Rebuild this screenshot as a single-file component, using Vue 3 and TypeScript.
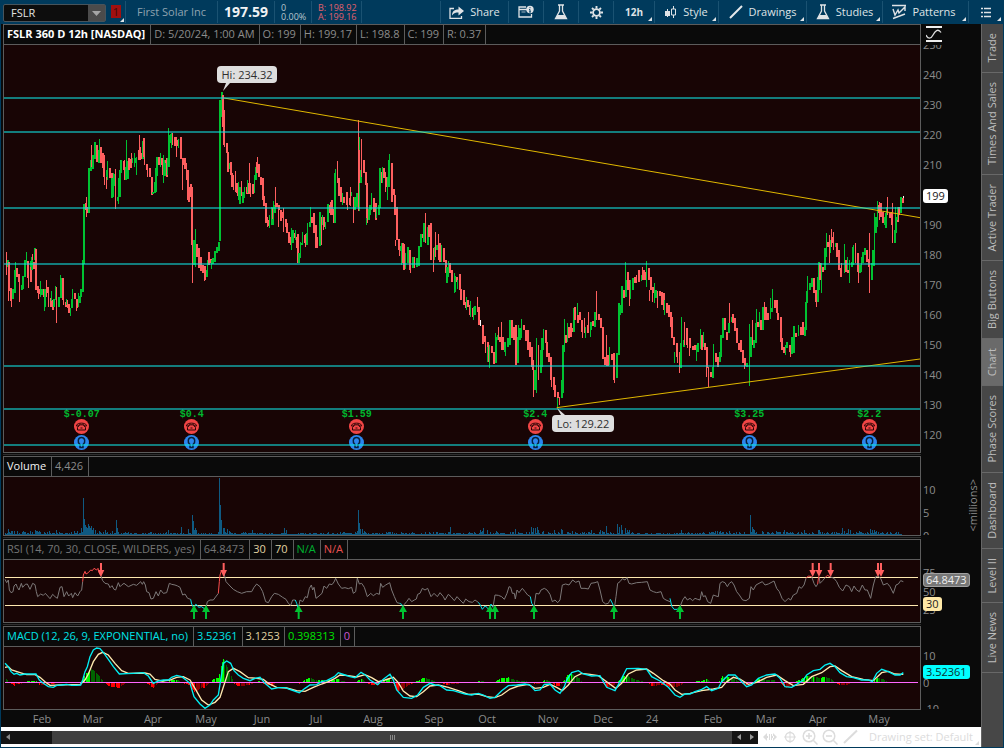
<script setup lang="ts">
import { ref } from 'vue'

type Point = [number, number]

interface Bar {
  x: number
  top: number
  height: number
  width: number
  fill: string
}

interface AxisLabel {
  text: string
  at: number
}

const symbol = ref('FSLR')
const activeTab = ref('Chart')

const tabs = [
  'Trade', 'Times And Sales', 'Active Trader', 'Big Buttons', 'Chart',
  'Phase Scores', 'Dashboard', 'Level II', 'Live News',
]

const quoteCells = ['D: 5/20/24, 1:00 AM', 'O: 199', 'H: 199.17', 'L: 198.8', 'C: 199', 'R: 0.37']

// Chart units: three per pixel. G/R are bodies, g/r are wicks, w is an unchanged bar.
const barColors: Record<string, string> = { g: '#00c232', r: '#ff5f5f', w: '#ffffff' }

const history: [number, string][] = [
  [0, `r18 485 556;G21 510 530;R24 517 603;r24 600 634;R30 593 634;r33 634 650;G36 597 628;G42 540 610;g45 517 545;R48 533 562;R54 552 575;r57 575 637;G63 586 600;G66 558 598;G72 510 560;g78 486 520;R81 512 565;r84 560 593;R90 528 576;g90 513 530;G93 500 540;r96 492 510;R99 517 538;G102 475 510;R105 478 600;R111 588 610;r114 600 628;R117 598 612;g120 573 620;G123 597 616;R129 597 620;G131 597 650;g132 640 662;r138 569 620;R141 590 610;r144 595 650;R150 625 650;g153 602 632;R156 630 660;G160 627 650;g165 588 630;r168 590 700;G174 622 650;G180 563 625;g181 556 575;R186 563 630;r189 600 646;R195 636 650;g198 626 645;R204 642 668;r201 630 655;g210 655 677;G213 628 655;g216 598 650;R222 608 626;R228 626 655;r228 655 664;g234 610 650;G237 618 640;G240 597 620;G245 510 607;G250 343 522;R255 340 360;r258 320 380;R261 350 368;G264 235 370;G270 210 242;r273 165 230;G276 196 236;G282 155 206;R288 165 215;g294 180 220;g297 148 218;R300 172 218;R306 188 235;R310 230 260;r312 196 285;G318 240 262;g321 213 270;r318 262 298;R327 235 265;R333 248 270;G334 264 324;g339 250 320;G340 252 288;r345 238 356;G351 320 332;g354 265 342;G358 240 322;G361 210 250;R369 212 240;r372 210 270;G376 230 270;g378 150 255;G382 214 268;R384 205 240;R390 206 235;r393 190 230;g396 205 220;g402 190 232;G405 204 220;g408 200 254;R414 180 210;r417 136 200;r420 170 210;R423 190 206;G426 153 208;R430 145 202;r432 145 226;R438 222 240;r441 225 262;R446 233 260;R452 260 315;G456 305 312;G462 276 310;G466 235 306;G468 200 258;R474 202 225;g480 190 230;R483 204 226;r486 212 256;g489 195 280;G492 210 258;R495 210 220;R498 204 262;g501 205 255;G505 136 232;g504 115 140;G511 132 160;g514 130 175;r517 130 165;R522 142 168;r528 142 200;R530 150 168;g534 148 175;R540 142 206;R546 205 225;r546 225 300;R552 205 238;r558 218 270;R561 240 330;R564 290 336;R570 282 320;R574 290 465;r576 465 578;G579 450 526;g585 418 530;R588 462 500;R594 475 535;R600 500 542;R606 525 548;R611 528 570;r612 560 574;G617 540 560;g621 510 545;R624 487 525;R630 508 520;g633 510 536;G636 505 522;G642 483 515;G648 470 490;G654 456 484;G658 30 452;G662 6 80;R666 14 110;R670 60 165;r672 120 172;R678 160 188;R682 186 246;G686 220 236;R690 215 255;R694 250 292;r699 255 300;r705 242 305;R708 280 308;r711 290 318;G716 292 342;g714 275 330;r723 272 318;G727 306 340;g732 290 325;R737 292 312;g741 270 310;R745 280 312;r747 220 308;r750 278 320;R756 283 312;g762 255 310;G765 230 270;R768 215 250;r771 200 250;R774 222 262;R780 262 285;R786 265 330;R790 318 348;R796 340 400;r801 380 412;R804 390 408;g807 375 415;G812 350 405;R816 355 388;g819 333 405;G823 345 370;r825 290 350;R828 338 352;R834 345 360;r834 345 410;R840 360 393;r846 365 385;r849 355 425;R854 388 410;R858 400 430;R864 425 460;R870 440 465;g873 415 480;G876 420 460;R882 430 445;g885 420 450;r888 440 475;R892 432 520;G895 490 520;g900 455 505;G903 460 465;g906 427 465;R912 436 460;r915 432 470;G919 430 465;g921 400 465;G927 395 410;g930 352 405;R934 380 400;R939 370 430;R946 405 475;r951 440 475;G956 366 468`],
  [960, `r3 380 465;g7 375 405;R9 380 410;r10 385 420;g15 395 418;G21 342 395;R27 345 370;r30 335 375;R33 330 375;R39 358 398;G43 250 400;g46 238 260;r51 212 280;R55 265 318;R60 290 335;g66 310 345;R70 320 340;R78 305 345;r81 320 360;R86 325 345;r90 292 348;g93 305 318;r99 320 398;G103 322 360;G108 310 350;G113 142 362;r115 90 363;r118 180 280;G121 240 278;r124 147 260;R129 210 250;R134 245 285;R139 280 400;g138 385 405;G144 358 390;G148 345 375;g154 310 360;R159 325 365;R165 340 390;g168 350 385;G174 345 375;G178 235 355;R184 245 280;g187 230 280;R190 235 265;r196 245 305;R199 262 290;g201 262 330;G205 210 290;g208 193 218;R213 220 335;R219 297 315;R222 315 375;R227 350 450;r226 450 468;R234 448 480;r236 460 498;G240 468 482;R245 460 520;g243 460 525;R250 462 540;g256 490 538;G262 472 520;R268 480 540;r271 520 548;G276 500 535;r282 500 535;G288 505 530;G294 468 528;G300 432 470;R306 432 445;G308 400 455;r316 370 460;G321 410 465;R324 405 440;R331 398 510;G338 480 510;r340 475 545;g342 470 510;r346 425 500;G349 465 480;r355 433 510;R358 460 515;g364 465 515;R370 475 515;R376 510 550;G379 530 580;g383 513 560;R388 520 550;R394 540 575;G401 558 605;g403 550 610;R407 560 575;g410 570 598;R416 552 600;R421 598 630;R428 600 645;R434 635 655;g437 620 660;R440 630 650;R446 645 675;g450 632 680;R455 655 680;g460 650 690;G463 648 675;r470 620 665;R474 652 705;r478 650 680;w480 690 708;R486 705 762;R492 738 755;r495 738 790;R500 755 815;g502 770 815;g508 765 835;R513 768 790;R519 785 822;G524 740 820;g526 730 770;G530 735 750;r533 710 750;R537 742 755;r542 697 780;R547 740 780;G553 755 785;g556 765 798;G562 745 770;G567 690 765;R573 690 745;R579 710 750;R585 705 825;G590 740 820;g593 705 800;G598 715 750;g604 686 745;R609 705 720;R614 720 752;R620 720 780;R626 755 800;R632 770 830;R637 810 840;r638 840 920;G642 840 900;g648 745 908;r655 765 870;G659 780 850;G664 745 830;g668 717 780;R674 720 760;R679 755 800;R685 790 815;R691 800 870;r692 870 892;R698 860 900;R703 885 920;g710 905 950;R712 905 925;r716 920 945;G722 870 925;G726 765 908;g733 688 785;R734 735 760;g740 700 755;R745 712 745;R750 700 742;R754 715 725;G758 655 725;R763 650 690;g772 640 690;R770 675 700;R778 665 690;R784 690 725;r787 690 745;r793 685 730;g796 712 745;R802 705 730;r805 665 730;G811 695 720;g811 700 740;R817 692 708;G822 665 710;r829 602 690;R833 672 690;R839 685 715;R845 710 808;R851 800 825;r858 735 828;R862 795 828;g868 770 825;R874 792 810;R880 790 870;r883 870 878;G889 790 865;G893 640 795;G898 645 675;G904 588 670;R910 600 625;G916 570 622;g916 515 570;R921 545 600;R926 570 625;r928 620 648;g931 570 628;G936 565 600;R942 560 580;r948 555 580;R953 540 575`],
  [1920, `g2 555 572;r5 530 570;R10 540 570;R16 545 570;g19 513 590;R24 535 570;R29 560 600;r28 600 634;R36 590 610;r36 600 635;g43 580 640;G46 600 625;r52 603 655;R57 603 618;R64 605 645;R68 608 660;g73 630 675;R78 640 670;R84 645 680;R90 665 710;R94 680 745;R99 740 765;g101 785 820;R108 760 800;r111 770 818;R116 785 835;r116 830 850;G121 760 835;g124 680 770;G128 750 772;r133 695 765;R138 715 765;r142 720 775;R148 745 775;r148 760 797;R155 768 780;R161 765 780;g167 765 812;G172 760 785;g181 718 778;R184 735 780;g190 725 770;R193 760 780;R197 770 835;r197 830 860;r205 830 890;R210 845 862;G216 830 863;g220 762 830;R225 790 815;R231 800 830;G236 785 815;G241 735 800;G246 685 745;R252 683 720;R257 725 750;G263 700 730;r268 640 700;G272 680 695;R277 672 700;R283 685 722;R289 715 760;R294 760 780;R301 750 785;R306 780 820;R311 805 828;r313 810 838;G319 820 830;g328 703 888;G330 740 800;r335 690 765;G340 750 775;G345 700 760;g349 658 740;R352 695 712;g358 665 710;R361 690 720;G366 650 720;r371 635 690;R376 650 690;R382 670 690;g389 625 688;G394 655 665;g397 597 665;R401 630 655;R407 630 670;R412 670 690;R419 680 755;R424 745 780;R430 770 788;g434 765 795;G439 755 775;R446 765 785;r449 770 800;G454 740 792;G459 708 790;R466 730 742;g475 705 738;R480 710 735;R485 695 735;G491 710 738;G495 635 720;G499 602 640;g502 558 615;G508 580 600;G514 563 592;R519 565 610;R526 600 635;r527 630 652;G532 560 635;G534 517 600;R537 520 570;g542 520 610;R547 532 545;G552 475 540;g557 430 500;R561 455 470;r566 435 518;g569 450 490;r574 418 470;R574 440 460;r580 425 480;G584 460 470;R588 460 500;R593 480 540;R600 535 560;r604 520 562;g611 462 550;R616 510 545;g622 500 545;R622 540 550;g628 510 580;G632 515 530;G637 470 525;g640 465 515;r646 458 520;R651 490 545;r653 540 578;G658 525 550;g662 500 545;G667 485 520;G672 475 495;R678 480 515;R685 508 530;r688 430 610;G692 520 570;g695 480 560;G700 480 528;g701 370 480;G705 380 430;g710 332 410;R715 345 370;r718 335 390;R721 340 380;R726 365 400;G732 380 405;G736 370 415;g738 350 400;r742 322 375;R748 370 385;R754 365 405;r757 340 460;G761 420 460;G766 380 430;g766 350 390;R770 370 395;g772 350 390;R775 350 375;G781 322 370;R786 325 340;w789 319 323`],
]

const candles: Bar[] = history.flatMap(([offset, text]) =>
  text.split(';').map((entry) => {
    const [x, top, bottom] = entry.slice(1).split(' ').map(Number)
    const kind = entry[0]
    const wide = kind === 'G' || kind === 'R'
    return {
      x: Math.round((x + offset) / 3) * 3,
      top,
      height: bottom - top,
      width: wide ? 6 : 3,
      fill: barColors[kind.toLowerCase()],
    }
  }),
)

const levels = [21, 123, 351, 519, 825, 954, 1062]

const events = [
  { at: 245, amount: '$-0.07' },
  { at: 575, amount: '$0.4' },
  { at: 1070, amount: '$1.59' },
  { at: 1606, amount: '$2.4' },
  { at: 2248, amount: '$3.25' },
  { at: 2608, amount: '$2.2' },
]

const span = 2748
const origin = 12
const across = (unit: number) => `${((unit - origin) / span) * 100}%`
const down = (px: number, height: number) => `${(px / height) * 100}%`

const priceLabels: AxisLabel[] = Array.from({ length: 14 }, (_, i) => ({
  text: String(250 - i * 10),
  at: i * 30,
})).filter((label) => label.text !== '200')
const volumeLabels: AxisLabel[] = [{ text: '10', at: 13 }, { text: '5', at: 36 }, { text: '0', at: 59 }]
const rsiLabels: AxisLabel[] = [{ text: '75', at: 13 }, { text: '50', at: 32 }, { text: '25', at: 50 }]
const macdLabels: AxisLabel[] = [{ text: '10', at: 9 }, { text: '0', at: 36 }, { text: '-10', at: 62 }]

const months: [string, number][] = [
  ['Feb', 42], ['Mar', 93], ['Apr', 153], ['May', 206], ['Jun', 262], ['Jul', 316], ['Aug', 373], ['Sep', 434],
  ['Oct', 487], ['Nov', 548], ['Dec', 603], ['24', 652], ['Feb', 713], ['Mar', 766], ['Apr', 818], ['May', 879],
]

// Volume: quiet sessions plus the sessions that stand out.
const volumeSpikes: Record<number, number> = {
  24: 18, 105: 15, 108: 12, 168: 14, 243: 20, 249: 111, 252: 48, 255: 30, 258: 24, 261: 20, 264: 33, 267: 26, 270: 22, 273: 26, 276: 16, 279: 20, 285: 15,
  315: 14, 348: 45, 351: 20, 504: 14, 543: 24, 564: 18, 576: 60, 579: 42, 582: 15, 585: 20, 588: 14, 657: 171, 660: 90, 663: 46, 669: 20, 672: 20, 681: 18, 687: 12,
  756: 14, 852: 22, 858: 15, 1071: 12, 1074: 75, 1077: 36, 1080: 18, 1086: 18, 1092: 12, 1350: 24, 1440: 16, 1449: 22, 1461: 15, 1545: 18, 1593: 24, 1599: 20, 1605: 22, 1611: 24, 1614: 16,
  1662: 15, 1683: 18, 1686: 15, 1773: 15, 1800: 15, 1818: 28, 1851: 34, 1857: 24, 1863: 31, 1866: 15, 1875: 22, 1881: 16, 1887: 16,
  2043: 15, 2160: 12, 2250: 60, 2256: 25, 2259: 18, 2262: 14, 2352: 16, 2412: 14, 2454: 16, 2457: 16, 2526: 22, 2532: 12, 2544: 18, 2550: 14, 2610: 18, 2616: 14, 2622: 14,
}
const busy: Point[] = [[15, 10], [280, 12], [330, 9], [400, 5], [480, 6], [620, 4], [690, 8], [800, 4], [950, 5], [1100, 6], [1220, 8], [1400, 5], [1440, 10], [1560, 6], [1620, 10], [1780, 8], [1880, 12], [1900, 4], [2010, 8], [2080, 5], [2160, 9], [2270, 9], [2360, 9], [2440, 8], [2520, 7], [2620, 9], [2700, 6]]

function interpolate(points: Point[], x: number): number {
  const next = points.findIndex((p) => p[0] >= x)
  if (next <= 0) return points[next === 0 ? 0 : points.length - 1][1]
  const [x0, y0] = points[next - 1]
  const [x1, y1] = points[next]
  return y0 + ((y1 - y0) * (x - x0)) / (x1 - x0)
}

const volumeBars: Bar[] = []
for (let x = 15, seed = 7; x < 2706; x += 3) {
  seed = (seed * 1103515245 + 12345) % 2147483648
  const noise = (seed / 2147483648) ** 2
  const quiet = 3 + Math.round((noise * interpolate(busy, x)) / 3) * 3
  const height = volumeSpikes[x] ?? quiet
  volumeBars.push({ x, top: 255 - height, height, width: 3, fill: '#0f5a82' })
}

// RSI: each run is [colour, offset, points].
const tones: Record<string, string> = { n: '#7c7878', r: '#ff4d4d', c: '#00e0e8' }
const rsiRuns: [string, number, string][] = [
  ['n', 0, '15,388 20,398 25,390 28,420 33,428 39,425 42,408 48,402 52,412 57,420 64,400 68,412 76,403 82,402 90,418 98,400 105,404 109,425 113,440 122,432 130,436 136,430 150,446 158,433 165,440 172,445 180,412 186,410 192,440 200,425 206,438 214,430 218,443 225,428 233,438 240,425 245,420 248,395'],
  ['r', 0, '248,395 250,375 255,364 258,372 265,368 272,360 277,362 282,355 290,360 294,355 297,368 303,378'],
  ['n', 0, '303,378 308,392 315,400 325,402 330,413 336,407 342,418 347,420 355,398 360,410 365,405 372,400 385,410 400,403 410,406 422,395 427,403 431,395 436,405 440,425 447,428 453,447 460,445 468,425 475,438 482,420 490,430 500,428 508,400 515,403 525,405 533,408 540,412 548,435 555,432 563,445 572,448'],
  ['c', 0, '572,448 575,462 582,475 587,463 592,466 596,472 604,470 612,475 617,478'],
  ['n', 0, '617,478 622,455 630,450 640,450 655,430'],
  ['r', 0, '655,430 658,395 660,375 664,362 670,362'],
  ['n', 0, '670,362 678,395 690,408 700,418 712,425 725,430 740,425 755,425 762,412 770,402 780,410 788,425 797,455 805,458 815,440 823,430 835,433 848,442 858,448 865,460 872,466 878,450 886,450'],
  ['c', 0, '886,450 890,460 895,476'],
  ['n', 0, '895,476 900,450 908,455 916,440 922,443 928,415 934,405 938,420 942,412 948,445 957,438 966,430 972,408 980,415 988,402 996,404 1002,396 1007,385 1015,402 1025,415 1035,413 1045,416 1055,412 1060,430 1067,425 1072,384 1078,402 1085,400 1093,412 1102,440 1112,430 1120,437 1130,430 1138,433 1142,400 1148,412 1157,405 1169,398 1175,420 1183,440 1191,458 1199,460'],
  ['c', 1005, '194,460 200,463 204,472'],
  ['n', 1005, '204,472 208,463 215,455 222,445 230,455 238,450 244,447 248,433 255,430 262,415 270,420 278,415 288,440 297,430 307,440 315,428 325,440 330,450 340,433 348,440 358,452 366,440 375,450 385,460 392,447 402,455 412,457 420,450 430,457'],
  ['c', 1005, '430,457 436,465 442,478 450,468 456,472 462,480 468,462 474,472'],
  ['n', 1005, '474,472 480,435 490,436 500,440 508,448 516,430 522,410 527,412 532,430 538,430 541,447 546,420 552,428 562,415 570,425 578,435 586,440'],
  ['c', 1005, '586,440 590,460 597,470'],
  ['n', 1005, '597,470 603,430 612,432 618,420 628,415 636,420 645,433 652,455 660,450 668,458 675,450 682,405 692,402 702,405 713,390 722,397 732,393 738,415 750,415 760,417 768,400 780,398 788,395 795,420 803,455 812,462 820,460 826,448'],
  ['c', 1005, '826,448 833,462 838,475'],
  ['n', 1005, '838,475 843,440 848,400 855,395 862,386 870,390 876,383 882,400 890,402 905,398 920,397 937,395 945,420 955,425 965,428 978,425 985,445 993,450 1005,455'],
  ['c', 2010, '0,445 5,468 12,478 22,478 30,470'],
  ['n', 2010, '30,470 38,450 45,440 52,450 60,445 68,452 75,445 83,448 90,450 95,425 100,440 106,437 113,455 122,460 130,435 138,438 145,440 150,400 157,395 165,398 172,410 178,400 185,395 192,405 200,425 208,435 218,450 228,452 238,445 243,410 250,420 258,405 267,400 277,395 285,405 295,402 312,393 320,415 328,425 336,445 345,455 355,445 362,450 370,435 380,430 387,410 394,415 402,405 408,385'],
  ['r', 2010, '408,385 415,378 425,380'],
  ['n', 2010, '425,380 432,400 438,410 443,402'],
  ['r', 2010, '443,402 446,380 448,383'],
  ['n', 2010, '448,383 450,400 458,392 466,382'],
  ['r', 2010, '466,382 472,376 480,380'],
  ['n', 2010, '480,380 492,385 500,395 508,412 518,423 528,405 538,410 545,425 552,408 560,420 568,425 577,405 585,420 592,420 602,445 610,405 617,380 624,378 632,385 640,405 652,400 660,410 670,430 678,405 685,402 692,392 700,395'],
]
const parse = (text: string): Point[] => text.split(' ').map((pair) => pair.split(',').map(Number) as Point)
const sellSignals = [303, 671, 2438, 2457, 2492, 2634, 2643]
const buySignals = [582, 618, 896, 1209, 1470, 1485, 1602, 1842, 2040]

const macd = parse('15,640 25,650 33,665 42,673 50,670 60,675 75,672 90,672 108,672 118,690 130,700 145,710 160,712 170,706 185,705 200,703 215,706 230,706 242,705 248,690 255,665 262,650 270,620 280,600 290,594 300,596 312,610 325,628 340,650 358,672 380,671 400,670 430,668 445,678 460,700 475,693 490,690 505,690 515,682 530,676 545,680 555,688 570,700 582,740 600,762 615,775 630,765 640,750 655,735 662,690 670,640 680,633 692,640 702,662 715,675 730,685 750,692 765,685 780,682 795,700 815,717 835,713 855,713 875,720 898,728 915,715 930,705 950,704 965,695 980,692 1003,680 1015,668 1035,675 1050,680 1065,683 1083,667 1095,674 1110,690 1133,704 1150,688 1170,673 1180,690 1190,720 1210,742 1235,745 1253,735 1270,712 1290,700 1305,705 1320,707 1340,720 1360,722 1380,728 1395,732 1415,735 1435,730 1450,735 1470,745 1485,742 1505,722 1525,707 1550,705 1575,702 1590,705 1605,722 1620,720 1633,703 1650,702 1665,720 1680,730 1693,710 1700,690 1715,668 1735,662 1750,672 1775,678 1800,677 1820,712 1845,722 1860,695 1870,675 1880,656 1915,655 1940,658 1955,680 1980,693 2005,712 2025,735 2040,742 2055,732 2070,732 2085,725 2105,718 2120,710 2135,722 2155,715 2165,695 2185,675 2205,675 2220,690 2240,710 2255,705 2275,685 2300,675 2325,672 2340,685 2355,710 2375,712 2390,703 2410,690 2420,675 2440,662 2460,658 2475,645 2490,640 2505,650 2520,668 2540,680 2560,683 2585,690 2605,690 2617,695 2630,670 2645,658 2665,665 2685,675 2700,675 2710,668')
const signal = parse('15,652 25,650 35,660 60,668 80,674 105,674 120,682 135,695 150,706 180,705 210,704 240,704 255,690 265,672 280,635 295,613 308,607 325,615 345,640 365,662 385,670 435,669 450,672 465,688 485,693 510,690 530,682 550,680 570,690 585,715 605,750 625,765 645,757 660,742 672,705 685,665 700,655 720,665 745,683 770,685 790,688 805,700 830,712 860,714 890,722 915,724 940,712 965,702 985,695 1005,685 1020,675 1045,677 1070,681 1095,674 1115,683 1135,695 1155,690 1180,682 1195,698 1210,723 1230,738 1250,740 1270,725 1290,708 1315,705 1345,712 1375,722 1405,733 1435,732 1460,740 1485,743 1505,735 1530,717 1555,708 1585,703 1605,715 1630,712 1650,703 1670,712 1687,722 1705,705 1725,680 1745,670 1770,673 1795,677 1820,695 1847,715 1865,700 1885,672 1910,660 1940,657 1960,670 1990,692 2010,702 2025,720 2045,733 2070,730 2105,722 2140,717 2165,712 2180,695 2200,682 2220,687 2245,703 2270,697 2300,682 2330,675 2355,692 2380,707 2410,703 2435,680 2465,668 2490,650 2505,648 2525,662 2555,680 2590,688 2620,692 2645,668 2665,664 2685,672 2710,673')

const histogram: Bar[] = []
for (let x = 15, previous = 0; x < 2706; x += 3) {
  const value = interpolate(signal, x) - interpolate(macd, x)
  const rising = value >= previous
  const size = Math.round(Math.abs(value) / 3) * 3
  const fill = value > 0 ? (rising ? '#00ff00' : '#006400') : rising ? '#8b0000' : '#ff0000'
  if (size > 0 && x % 15 !== 0) histogram.push({ x, top: value > 0 ? 697 - size : 697, height: size, width: 3, fill })
  previous = value
}

const line = (points: Point[], offset = 0) => points.map(([x, y]) => `${x + offset},${y}`).join(' ')
</script>

<template>
  <div class="app">
    <header class="toolbar">
      <div class="symbol">
        <input v-model="symbol" aria-label="Symbol" />
        <button aria-label="Symbol list"><svg width="9" height="5" viewBox="0 0 9 5"><path d="M0 0h9L4.500 5z" fill="#a5a5a5" /></svg></button>
      </div>
      <button class="link-button corner" aria-label="Link group 1"><span>1</span></button>
      <div class="cell company">First Solar Inc</div>
      <div class="cell last">197.59</div>
      <div class="cell pair"><span>0</span><span>0.00%</span></div>
      <div class="cell pair bid"><span>B: 198.92</span><span>A: 199.16</span></div>
      <div class="cell filler"></div>
      <button class="cell share">
        <svg width="15" height="13" viewBox="0 0 15 13"><path d="M5 2.500H1v10h11.500V10" fill="none" stroke="#dfe3e6" stroke-width="1.300" /><path d="M3 9.500C3 5 6 3.500 9.500 3.500V.5L15 5 9.500 9.500V6.500C7 6.500 4.500 7 3 9.500z" fill="#dfe3e6" /></svg>
        Share
      </button>
      <button class="cell icon" aria-label="Company info">
        <svg width="16" height="14" viewBox="0 0 16 14"><path d="M8 2H1v10h12.500V9M1 4.500h8" fill="none" stroke="#dfe3e6" stroke-width="1.300" /><path d="M3.500 7h4" stroke="#9fb4c2" /><circle cx="12" cy="4.500" r="3.700" fill="#dfe3e6" /><path d="M12 2.200v1M11.200 4.500H12V7M11 7h2" stroke="#003a5c" fill="none" /></svg>
      </button>
      <button class="cell icon" aria-label="Edit studies">
        <svg width="14" height="16" viewBox="0 0 14 16"><path d="M4 1h6M5.500 1v6L1.500 14.500h11L8.500 7V1" fill="none" stroke="#dfe3e6" stroke-width="1.300" /><path d="M3.500 11h7l2 4h-11z" fill="#dfe3e6" /></svg>
      </button>
      <button class="cell icon" aria-label="Chart settings">
        <svg width="15" height="15" viewBox="0 0 15 15"><g stroke="#dfe3e6" fill="none"><circle cx="7.500" cy="7.500" r="3.400" stroke-width="1.800" /><path d="M7.500 1v2.500M7.500 11.500V14M1 7.500h2.500M11.500 7.500H14M3 3l1.700 1.700M10.300 10.300L12 12M12 3l-1.700 1.700M4.700 10.300L3 12" stroke-width="1.900" /></g></svg>
      </button>
      <button class="cell period corner">12h</button>
      <button class="cell style corner">
        <svg width="12" height="14" viewBox="0 0 12 14"><path d="M2.500 4v8" stroke="#dfe3e6" /><path d="M0 6h5v5H0z" fill="#dfe3e6" /><path d="M8.500 1v12" stroke="#dfe3e6" /><path d="M6.500 4h4v6h-4z" fill="#003a5c" stroke="#dfe3e6" /></svg>
        Style
      </button>
      <button class="cell drawings corner">
        <svg width="14" height="14" viewBox="0 0 14 14"><path d="M1 13L13 1" stroke="#e6e9eb" stroke-width="2" /></svg>
        Drawings
      </button>
      <button class="cell studies corner">
        <svg width="14" height="16" viewBox="0 0 14 16"><path d="M4 1h6M5.500 1v6L1.500 14.500h11L8.500 7V1" fill="none" stroke="#dfe3e6" stroke-width="1.300" /><path d="M3.500 11h7l2 4h-11z" fill="#dfe3e6" /></svg>
        Studies
      </button>
      <button class="cell patterns corner">
        <svg width="14" height="16" viewBox="0 0 14 16"><g fill="none" stroke="#dfe3e6" stroke-width="1.400"><path d="M0 1.500h14M1 14.500L13 10M1 5l2 6 3-5 1 3 6-6v4" /></g></svg>
        Patterns
      </button>
      <button class="cell list corner" aria-label="Menu">
        <svg width="12" height="11" viewBox="0 0 12 11"><path d="M1 1.500h2M1 5.500h2M1 9.500h2M4 1.500h7M4 5.500h7M4 9.500h7" stroke="#dfe3e6" stroke-width="1.600" /></svg>
      </button>
    </header>

    <div class="body">
      <div class="work">
        <main class="charts">
          <section class="panel">
            <div class="head">
              <strong>FSLR 360 D 12h [NASDAQ]</strong>
              <span v-for="cell in quoteCells" :key="cell" class="quote">{{ cell }}</span>
            </div>
            <div class="plot">
              <svg class="graph" viewBox="12 -135 2748 1221" preserveAspectRatio="none">
                <g shape-rendering="crispEdges">
                  <rect v-for="(bar, i) in candles" :key="i" :x="bar.x" :y="bar.top" :width="bar.width" :height="bar.height" :fill="bar.fill" />
                </g>
                <path d="M672 24L2760 383M1670 953L2760 807" fill="none" stroke="#e0b800" stroke-width="3" />
              </svg>
              <div v-for="event in events" :key="event.at" class="event" :style="{ left: across(event.at) }">
                <span>{{ event.amount }}</span>
                <svg width="15" height="15" viewBox="0 0 15 15"><circle cx="7.500" cy="7.500" r="7.500" fill="#f04545" /><path d="M2.500 7C2 3.200 13 3.200 12.500 7H10V5.800H5V7zM5 6.500L3.500 8.500V11h8V8.500L10 6.500" fill="none" stroke="#2a0606" /><path d="M6.500 9h2" stroke="#2a0606" /></svg>
                <svg width="15" height="15" viewBox="0 0 15 15"><circle cx="7.500" cy="7.500" r="7.500" fill="#2c86ee" /><path d="M6 9.500C3 7 4 2.500 7.500 2.500S12 7 9 9.500v3H6z" fill="none" stroke="#06203c" stroke-width="1.500" /></svg>
              </div>
              <svg class="graph" viewBox="12 -135 2748 1221" preserveAspectRatio="none" shape-rendering="crispEdges">
                <rect v-for="y in levels" :key="y" x="12" :y="y" width="2748" height="6" fill="#10e0e0" fill-opacity="0.55" />
              </svg>
              <div class="bubble high">Hi: 234.32<svg width="8" height="8" viewBox="0 0 8 8"><path d="M4 0h4L1 8z" fill="#dedede" /></svg></div>
              <div class="bubble low">Lo: 129.22<svg width="8" height="7" viewBox="0 0 8 7"><path d="M0 0l4 7h4z" fill="#dedede" /></svg></div>
            </div>
          </section>
          <aside class="axis">
            <button class="fit" aria-label="Fit price scale"><svg width="16" height="16" viewBox="0 0 16 16"><path d="M0 1h16M0 15h16" stroke="#eee" stroke-width="2" /><path d="M0 9c2 4.500 5 4 7 0S12 2 15 6.500" fill="none" stroke="#ddd" stroke-width="1.300" /></svg></button>
            <div class="scale">
              <span v-for="label in priceLabels" :key="label.text" :style="{ top: down(label.at, 407) }">{{ label.text }}</span>
              <span class="tag white" :style="{ top: down(151, 407) }">199</span>
            </div>
          </aside>

          <div class="split"></div>

          <section class="panel">
            <div class="head"><span class="c-white">Volume</span><span>4,426</span></div>
            <div class="plot">
              <svg class="graph" viewBox="12 81 2748 174" preserveAspectRatio="none" shape-rendering="crispEdges">
                <rect v-for="bar in volumeBars" :key="bar.x" :x="bar.x" :y="bar.top" :width="bar.width" :height="bar.height" :fill="bar.fill" />
              </svg>
            </div>
          </section>
          <aside class="axis">
            <div class="scale">
              <span v-for="label in volumeLabels" :key="label.text" :style="{ top: down(label.at, 58) }">{{ label.text }}</span>
            </div>
            <span class="unit">&lt;millions&gt;</span>
          </aside>

          <div class="split"></div>

          <section class="panel">
            <div class="head">
              <span class="c-dim">RSI (14, 70, 30, CLOSE, WILDERS, yes)</span><span class="c-dim">64.8473</span>
              <span class="c-sand">30</span><span class="c-sand">70</span><span class="c-green quote">N/A</span><span class="c-red quote">N/A</span>
            </div>
            <div class="plot">
              <svg class="graph" viewBox="12 330 2748 186" preserveAspectRatio="none">
                <path d="M15 382.500H2754M15 466.500H2754" stroke="#ffe9b0" stroke-width="3" shape-rendering="crispEdges" />
                <polyline v-for="([tone, offset, points], i) in rsiRuns" :key="i" :points="line(parse(points), offset)" fill="none" :stroke="tones[tone]" stroke-width="3" />
                <path v-for="x in sellSignals" :key="x" :d="`M${x - 3} 339h6v21h7L${x} 381 ${x - 10} 360h7z`" fill="#ff5f5f" />
                <path v-for="x in buySignals" :key="x" :d="`M${x - 3} 507h6v-21h9L${x} 465 ${x - 12} 486h9z`" fill="#00c232" />
              </svg>
            </div>
          </section>
          <aside class="axis">
            <div class="scale">
              <span v-for="label in rsiLabels" :key="label.text" :style="{ top: down(label.at, 62) }">{{ label.text }}</span>
              <span class="tag gray" :style="{ top: down(20, 62) }">64.8473</span>
              <span class="tag sand" :style="{ top: down(44, 62) }">30</span>
            </div>
          </aside>

          <div class="split"></div>

          <section class="panel">
            <div class="head">
              <span class="c-cyan">MACD (12, 26, 9, EXPONENTIAL, no)</span><span class="c-cyan quote">3.52361</span>
              <span class="c-sand quote">3.1253</span><span class="c-lime">0.398313</span><span class="c-violet quote">0</span>
            </div>
            <div class="plot">
              <svg class="graph" viewBox="12 591 2748 186" preserveAspectRatio="none">
                <g shape-rendering="crispEdges">
                  <rect v-for="bar in histogram" :key="bar.x" :x="bar.x" :y="bar.top" :width="bar.width" :height="bar.height" :fill="bar.fill" />
                  <path d="M15 697.500H2754" stroke="#ff66ff" stroke-width="3" />
                </g>
                <polyline :points="line(signal)" fill="none" stroke="#ffe9b0" stroke-width="4" />
                <polyline :points="line(macd)" fill="none" stroke="#00f0f5" stroke-width="4" />
              </svg>
            </div>
          </section>
          <aside class="axis">
            <div class="scale">
              <span v-for="label in macdLabels" :key="label.text" :style="{ top: down(label.at, 62) }">{{ label.text }}</span>
              <span class="tag aqua" :style="{ top: down(25, 62) }">3.52361</span>
            </div>
          </aside>

          <div class="months">
            <span v-for="([name, at], i) in months" :key="i" :style="{ left: across(at * 3) }">{{ name }}</span>
          </div>
        </main>

        <footer class="bottom">
          <div class="scroll">
            <button class="step back" aria-label="Scroll left"><svg width="4" height="6" viewBox="0 0 4 6"><path d="M4 0v6L0 3z" fill="#888" /></svg></button>
            <div class="thumb"><i></i><i></i><i></i></div>
            <button class="step" aria-label="Step left"><svg width="4" height="6" viewBox="0 0 4 6"><path d="M4 0v6L0 3z" fill="#999" /></svg></button>
            <button class="step" aria-label="Step right"><svg width="4" height="6" viewBox="0 0 4 6"><path d="M0 0v6l4-3z" fill="#999" /></svg></button>
          </div>
          <button class="tool" aria-label="Pan"><svg width="16" height="16" viewBox="0 0 16 16"><path d="M1 8l4-4v8zM15 8l-4-4v8zM4 7h2v2H4zM10 7h2v2h-2zM7 5h1v6H7zM9 5h1v6H9z" fill="#dcdcdc" /></svg></button>
          <button class="tool" aria-label="Crosshair"><svg width="16" height="16" viewBox="0 0 16 16"><g fill="none" stroke="#dcdcdc"><circle cx="8" cy="8" r="4.500" stroke-width="1.300" /><path d="M8 2v12M2 8h12" /></g></svg></button>
          <button class="tool" aria-label="Zoom in"><svg width="16" height="16" viewBox="0 0 16 16"><g fill="none" stroke="#dcdcdc" stroke-width="1.500"><circle cx="7" cy="7" r="5.800" /><path d="M4 7h6M7 4v6M11 11l4.500 4.500" /></g></svg></button>
          <button class="tool" aria-label="Zoom out"><svg width="16" height="16" viewBox="0 0 16 16"><g fill="none" stroke="#dcdcdc" stroke-width="1.500"><circle cx="7" cy="7" r="5.800" /><path d="M4 7h6M11 11l4.500 4.500" /></g></svg></button>
          <button class="tool" aria-label="Draw line"><svg width="16" height="16" viewBox="0 0 16 16"><path d="M2 14L15 1.500" stroke="#dcdcdc" stroke-width="2" /></svg></button>
          <button class="drawing-set corner">Drawing set: Default</button>
        </footer>
      </div>

      <nav class="tabs">
        <button v-for="tab in tabs" :key="tab" :class="{ active: tab === activeTab }" @click="activeTab = tab"><span>{{ tab }}</span></button>
      </nav>
    </div>
  </div>
</template>

<style>
html,
body,
#app {
  height: 100%;
  background: #003a5c;
}
</style>

<style scoped>
.app {
  display: flex;
  flex-direction: column;
  height: 100vh;
  overflow: hidden;
  box-sizing: border-box;
  padding: 0 1px 1px;
  background: #003a5c;
  color: #8c8c8c;
  font: 11px/14px "Open Sans", "Noto Sans", sans-serif;
}
svg {
  display: block;
  flex: none;
}
button,
input {
  font: inherit;
  color: inherit;
  margin: 0;
  padding: 0;
  border: 0;
  background: none;
}

/* toolbar */
.toolbar {
  display: flex;
  flex: none;
  height: 24px;
  color: #dfe3e6;
}
.symbol {
  display: flex;
  width: 101px;
  height: 16px;
  margin: 4px 5px 0 2px;
  border: 1px solid #47545c;
  border-radius: 2px;
  background: #0d0d0d;
}
.symbol input {
  flex: 1;
  min-width: 0;
  padding-left: 7px;
  color: #e2e2e2;
}
.symbol button {
  display: grid;
  place-items: center;
  width: 17px;
  background: #4b4b4b;
}
.link-button {
  width: 13px;
  padding-bottom: 1px;
}
.link-button span {
  display: block;
  width: 10px;
  height: 13px;
  line-height: 13px;
  background: #a01010;
  color: #3d0a0a;
}
.corner {
  position: relative;
}
.corner::after {
  content: "";
  position: absolute;
  right: 2px;
  bottom: 2px;
  border-left: 4px solid transparent;
  border-bottom: 4px solid currentColor;
}
.link-button.corner::after {
  right: 0;
}
.cell {
  display: flex;
  align-items: center;
  justify-content: center;
  flex: none;
  gap: 6px;
  box-sizing: border-box;
  height: 22px;
  margin-top: 1px;
  border-left: 1px solid #1a5272;
  white-space: nowrap;
}
.company {
  width: 92px;
  margin-left: 1px;
  color: #8fa3b0;
}
.last {
  width: 57px;
  color: #f0f2f4;
  font-size: 14px;
  font-weight: bold;
}
.pair {
  flex-direction: column;
  align-items: flex-start;
  gap: 0;
  width: 37px;
  padding-left: 6px;
  color: #b9c6cf;
  font-size: 9px;
  line-height: 9px;
}
.bid {
  width: 50px;
  color: #e0606c;
}
.filler {
  flex: 1;
}
.share {
  width: 68px;
}
.icon {
  width: 35px;
}
.period {
  width: 41px;
  font-weight: bold;
  font-size: 10px;
}
.style {
  width: 64px;
}
.drawings {
  width: 88px;
}
.studies {
  width: 76px;
}
.patterns {
  width: 86px;
  padding-right: 3px;
}
.list {
  width: 35px;
}

/* page body */
.body {
  display: flex;
  flex: 1;
  min-height: 0;
}
.work {
  display: flex;
  flex: 1;
  flex-direction: column;
  min-width: 0;
  background: #0a0a0a;
}
.charts {
  display: grid;
  flex: 1;
  grid-template-columns: minmax(0, 1fr) 60px;
  grid-template-rows: minmax(0, 429fr) 3px minmax(0, 80fr) 3px minmax(0, 84fr) 3px minmax(0, 84fr) 17px;
  min-height: 0;
  padding-left: 2px;
}
.panel {
  display: flex;
  flex-direction: column;
  min-height: 0;
  border: 1px solid #5c5c5c;
}
.head {
  display: flex;
  flex: none;
  height: 19px;
  border-bottom: 1px solid #5c5c5c;
  line-height: 18px;
  white-space: nowrap;
}
.head > * {
  padding: 0 5px 0 3px;
  border-right: 1px solid #5c5c5c;
}
.head > .quote {
  padding-right: 4px;
}
.head strong {
  color: #fff;
}
.plot {
  position: relative;
  flex: 1;
  min-height: 0;
  background: #180505;
}
.graph {
  position: absolute;
  inset: 0;
  width: 100%;
  height: 100%;
}
.event {
  position: absolute;
  bottom: 2px;
  display: flex;
  flex-direction: column;
  align-items: center;
  gap: 1px;
  transform: translateX(-50%);
  color: #00b82e;
  font: bold 10px/7px "Liberation Mono", monospace;
}
.bubble {
  position: absolute;
  padding: 2px 5px 1px;
  border-radius: 4px;
  background: #dedede;
  color: #2e2e2e;
  white-space: nowrap;
}
.bubble svg {
  position: absolute;
  left: 5px;
}
.high {
  left: 23.2%;
  top: 5.2%;
}
.high svg {
  top: 100%;
}
.low {
  left: 59.8%;
  bottom: 5%;
}
.low svg {
  bottom: 100%;
}
.split {
  grid-column: 1 / -1;
  height: 1px;
  margin: 1px 60px 1px 0;
  background: #2e2e2e;
}
.axis {
  display: flex;
  position: relative;
  flex-direction: column;
  min-height: 0;
  padding: 21px 0 1px;
}
.fit {
  position: absolute;
  left: 5px;
  top: 2px;
}
.scale {
  position: relative;
  flex: 1;
  overflow: hidden;
}
.scale span {
  position: absolute;
  left: 2px;
  transform: translateY(-50%);
}
.scale .tag {
  padding: 0 3px;
  border-radius: 3px;
  line-height: 14px;
}
.scale .white {
  background: #fff;
  color: #222;
}
.scale .gray {
  padding: 0 2px;
  border: 1px solid #a0a0a0;
  background: #777;
  color: #eee;
  line-height: 12px;
}
.scale .sand {
  background: #ffe9a8;
  color: #222;
}
.scale .aqua {
  background: #00ffff;
  color: #0a3030;
}
.unit {
  position: absolute;
  right: 1px;
  top: 23px;
  writing-mode: vertical-rl;
  transform: rotate(180deg);
}
.months {
  position: relative;
  grid-column: 1 / 2;
  margin: 0 1px;
}
.months span {
  position: absolute;
  top: 2px;
  transform: translateX(-50%);
}
.c-white { color: #f2f2f2; }
.c-dim { color: #757575; }
.c-sand { color: #e0d3a2; }
.c-green { color: #00b030; }
.c-red { color: #e85050; }
.c-cyan { color: #00e4e8; }
.c-lime { color: #00e400; }
.c-violet { color: #c858d0; }

/* scroll bar and drawing tools */
.bottom {
  display: flex;
  flex: none;
  align-items: center;
  height: 20px;
  background: #fff;
}
.scroll {
  display: flex;
  flex: 1;
  height: 13px;
  background: #141414;
}
.step {
  display: grid;
  place-items: center;
  width: 13px;
}
.back {
  margin-right: 38px;
}
.thumb {
  display: flex;
  flex: 1;
  align-items: center;
  justify-content: center;
  gap: 1px;
  background: #404040;
}
.thumb i {
  width: 1px;
  height: 5px;
  background: #8a8a8a;
}
.tool {
  width: 16px;
  margin-left: 4px;
}
.drawing-set {
  margin-left: 11px;
  padding-right: 8px;
  height: 20px;
  color: #dcdcdc;
}

/* side tabs */
.tabs {
  display: flex;
  flex: none;
  flex-direction: column;
  width: 21px;
  border-left: 1px solid #666;
  background: #474747;
}
.tabs button {
  display: flex;
  align-items: center;
  justify-content: center;
  padding: 9px 1px 9px 0;
  border-bottom: 1px solid #686868;
  color: #bdbdbd;
}
.tabs span {
  writing-mode: vertical-rl;
  transform: rotate(180deg);
}
.tabs .active {
  background: #6a6a6a;
}
</style>
